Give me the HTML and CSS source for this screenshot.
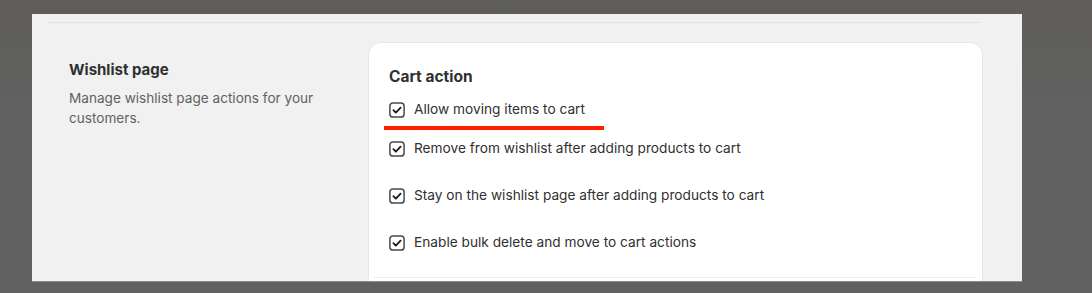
FILE: index.html
```html
<!DOCTYPE html>
<html lang="en">

<head>
    <meta charset="UTF-8">
    <meta name="viewport" content="width=device-width, initial-scale=1.0">
    <title>Wishlist settings</title>
    <link rel="stylesheet" href="styles.css">
</head>

<body>
    <div class="settings-panel">
        <div class="top-divider"></div>

        <div class="section">
            <div class="section-info">
                <h2>Wishlist page</h2>
                <p>Manage wishlist page actions for your customers.</p>
            </div>

            <div class="card">
                <h3>Cart action</h3>

                <label class="check-row first">
                    <svg class="check-box" width="16" height="16" viewBox="0 0 16 16">
                        <rect x="0.9" y="0.9" width="14.2" height="14.2" rx="3.2" fill="#fff" stroke="#4a4a4a" stroke-width="1.5"/>
                        <path d="M4.4 8.2 L6.8 10.6 L11.6 5.6" fill="none" stroke="#1a1a1a" stroke-width="1.8" stroke-linecap="round" stroke-linejoin="round"/>
                    </svg>
                    <span>Allow moving items to cart</span>
                </label>
                <div class="highlight-line"></div>

                <label class="check-row second">
                    <svg class="check-box" width="16" height="16" viewBox="0 0 16 16">
                        <rect x="0.9" y="0.9" width="14.2" height="14.2" rx="3.2" fill="#fff" stroke="#4a4a4a" stroke-width="1.5"/>
                        <path d="M4.4 8.2 L6.8 10.6 L11.6 5.6" fill="none" stroke="#1a1a1a" stroke-width="1.8" stroke-linecap="round" stroke-linejoin="round"/>
                    </svg>
                    <span>Remove from wishlist after adding products to cart</span>
                </label>

                <label class="check-row spaced">
                    <svg class="check-box" width="16" height="16" viewBox="0 0 16 16">
                        <rect x="0.9" y="0.9" width="14.2" height="14.2" rx="3.2" fill="#fff" stroke="#4a4a4a" stroke-width="1.5"/>
                        <path d="M4.4 8.2 L6.8 10.6 L11.6 5.6" fill="none" stroke="#1a1a1a" stroke-width="1.8" stroke-linecap="round" stroke-linejoin="round"/>
                    </svg>
                    <span>Stay on the wishlist page after adding products to cart</span>
                </label>

                <label class="check-row spaced">
                    <svg class="check-box" width="16" height="16" viewBox="0 0 16 16">
                        <rect x="0.9" y="0.9" width="14.2" height="14.2" rx="3.2" fill="#fff" stroke="#4a4a4a" stroke-width="1.5"/>
                        <path d="M4.4 8.2 L6.8 10.6 L11.6 5.6" fill="none" stroke="#1a1a1a" stroke-width="1.8" stroke-linecap="round" stroke-linejoin="round"/>
                    </svg>
                    <span>Enable bulk delete and move to cart actions</span>
                </label>

                <div class="card-divider"></div>
            </div>
        </div>
    </div>
</body>

</html>
```

FILE: styles.css
```css
/* General Reset */
* {
    margin: 0;
    padding: 0;
    box-sizing: border-box;
}

html, body {
    height: 100%;
}

body {
    font-family: 'Inter', 'Liberation Sans', sans-serif;
    background: linear-gradient(180deg, #5e5d5b, #616161 40%);
    color: #303030;
    padding: 14px 70px 0 32px;
    overflow: hidden;
}

/* Light settings panel */
.settings-panel {
    width: 990px;
    height: 268px;
    background-color: #f1f1f1;
    padding: 8px 40px 0 16px;
    overflow: hidden;
    border-bottom: 1px solid #8c8c8c;
}

.top-divider {
    height: 1px;
    background-color: #e3e3e3;
}

/* Annotated section: description on the left, card on the right */
.section {
    display: grid;
    grid-template-columns: 321px 1fr;
    margin-top: 20px;
}

.section-info {
    padding: 17px 0 0 21px;
}

.section-info h2 {
    font-size: 15px;
    line-height: 20px;
    font-weight: 650;
    color: #303030;
}

.section-info p {
    margin-top: 8px;
    max-width: 260px;
    font-size: 13.6px;
    line-height: 20px;
    color: #616161;
}

/* Card */
.card {
    background-color: #ffffff;
    border-radius: 12px 12px 0 0;
    box-shadow: 0 0 0 1px #e7e7e7;
    padding: 24px 20px 0 20px;
    height: 300px;
}

.card h3 {
    font-size: 15.5px;
    line-height: 20px;
    font-weight: 650;
    color: #303030;
}

.check-row {
    display: flex;
    align-items: center;
    gap: 9px;
    font-size: 13.7px;
    line-height: 20px;
    color: #303030;
}

.check-box {
    flex-shrink: 0;
    margin-top: 1px;
}

.check-row.first {
    margin-top: 12px;
}

.check-row.second {
    margin-top: 8px;
}

.check-row.spaced {
    margin-top: 27px;
}

/* Red annotation under the first option */
.highlight-line {
    width: 220px;
    height: 4px;
    margin: 7px 0 0 -5px;
    background-color: #ff1e00;
}

.card-divider {
    height: 1px;
    margin: 25px -15px 0 -15px;
    background-color: #ebebeb;
}
```
